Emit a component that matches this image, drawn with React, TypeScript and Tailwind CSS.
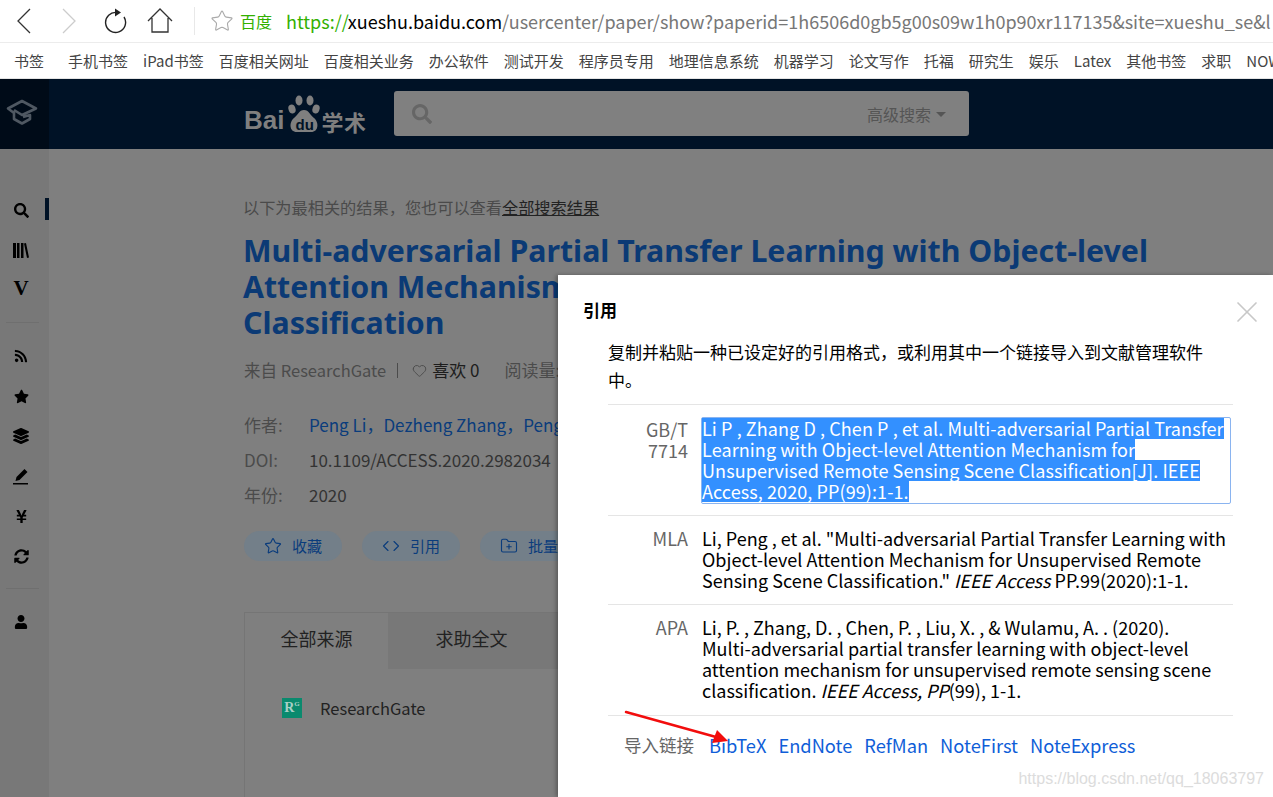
import { Star, Heart, Code, FolderPlus, X } from 'lucide-react'
import { FaSearch, FaRss, FaStar, FaLayerGroup, FaYenSign, FaSyncAlt, FaUser } from 'react-icons/fa'

const bookmarks = [
  '手机书签', 'iPad书签', '百度相关网址', '百度相关业务', '办公软件', '测试开发', '程序员专用', '地理信息系统',
  '机器学习', '论文写作', '托福', '研究生', '娱乐', 'Latex', '其他书签', '求职', 'NOW',
]

const COMMA = '\uFF0C'

const SideRow = ({ children, active }: { children: React.ReactNode; active?: boolean }) => (
  <div className="relative flex h-10 w-full items-center justify-center pr-[7px] text-black">
    {children}
    {active && <span className="absolute top-[8px] right-0 h-[22px] w-1 bg-[#001226]" />}
  </div>
)

const Sidebar = () => (
  <aside className="flex w-[49px] shrink-0 flex-col bg-[#787878] pt-[41px]">
    <SideRow active><FaSearch size={15} /></SideRow>
    <SideRow>
      <svg width="16" height="15" viewBox="0 0 16 15" fill="currentColor">
        <path d="M0 0h3v15H0zM4 0h2.500v15H4zM8 0h2.500v15H8zM11 0.500l2-0.500 3 14.500-2 0.500z" />
      </svg>
    </SideRow>
    <SideRow>
      <span className="-mt-[2px] font-['Liberation_Serif',serif] text-[21px] font-bold">V</span>
    </SideRow>
    <div className="mx-[6px] mt-[12px] mb-[13px] h-px w-[33px] bg-[#6f6f6f]" />
    <SideRow><FaRss size={14} /></SideRow>
    <SideRow><FaStar size={15} /></SideRow>
    <SideRow><FaLayerGroup size={16} /></SideRow>
    <SideRow>
      <svg width="16" height="17" viewBox="0 0 16 17" fill="currentColor">
        <path d="M11.500 1l3 3-8 8-4 1 1-4zM0 15h15v1.500H0z" />
      </svg>
    </SideRow>
    <SideRow><FaYenSign size={15} /></SideRow>
    <SideRow><FaSyncAlt size={15} /></SideRow>
    <div className="mx-[6px] mt-[12px] mb-[13px] h-px w-[33px] bg-[#6f6f6f]" />
    <SideRow><FaUser size={14} /></SideRow>
  </aside>
)

const Logo = () => (
  <div className="flex h-[40px] w-[124px] items-end text-[#7f7f7f]">
    <span className="font-['Liberation_Sans',sans-serif] text-[26px] leading-[27px] font-bold">Bai</span>
    <svg className="mb-[1px] ml-[1px] shrink-0" width="38" height="38" viewBox="0 0 36 38" fill="currentColor">
      <ellipse cx="13" cy="5.500" rx="3.500" ry="5" />
      <ellipse cx="24" cy="5.500" rx="3.500" ry="5" />
      <ellipse cx="6" cy="14" rx="3.500" ry="4.500" transform="rotate(-20 6 14)" />
      <ellipse cx="30" cy="14" rx="3.500" ry="4.500" transform="rotate(20 30 14)" />
      <path d="M18 15c5 0 6 5 10 8 5 4 5 14-3 14H11C3 37 3 27 8 23c4-3 5-8 10-8z" />
    </svg>
    <span className="mb-[2px] ml-[-28px] w-[18px] font-['Liberation_Sans',sans-serif] text-[15px] leading-[15px] font-bold text-[#001226]">du</span>
    <span className="ml-[8px] font-['Noto_Sans_CJK_SC',sans-serif] text-[22px] leading-[26px] font-bold tracking-[0.5px] whitespace-nowrap">学术</span>
  </div>
)

const Pill = ({ icon, label, w }: { icon: React.ReactNode; label: string; w: string }) => (
  <div className={`flex h-[30px] shrink-0 items-center gap-[10px] rounded-full bg-[#737f89] pl-[20px] text-[15px] text-[#0a3c7c] ${w}`}>
    {icon}
    <span className="whitespace-nowrap">{label}</span>
  </div>
)

const Meta = ({ label, children }: { label: string; children: React.ReactNode }) => (
  <div className="flex h-[35px] items-center text-[17px] whitespace-nowrap">
    <span className="w-[65px] text-[#4b4b4b]">{label}</span>
    {children}
  </div>
)

const Citation = ({ label, pad, lines }: { label: string; pad: string; lines: React.ReactNode[] }) => (
  <div className={`flex border-t border-[#e5e5e5] pt-[12px] ${pad}`}>
    <div className="w-[80px] shrink-0 text-right text-[18px] leading-[21px] text-[#666]">{label}</div>
    <div className="ml-[14px] text-[18px] leading-[21px] whitespace-nowrap text-black">
      {lines.map((line, i) => (
        <div key={i}>{line}</div>
      ))}
    </div>
  </div>
)

const selected = [
  'Li P , Zhang D , Chen P , et al. Multi-adversarial Partial Transfer',
  'Learning with Object-level Attention Mechanism for',
  'Unsupervised Remote Sensing Scene Classification[J]. IEEE',
  'Access, 2020, PP(99):1-1.',
]

const CiteModal = () => (
  <div className="absolute top-[196px] left-[558px] h-[522px] w-[715px] overflow-hidden bg-white pl-[25px] shadow-[-2px_0_4px_rgba(0,0,0,0.3)]">
    <h3 className="pt-[23px] text-[17px] leading-[24px] font-bold text-black">引用</h3>
    <X className="absolute top-[19px] right-[8px] text-[#c8c8c8]" size={36} strokeWidth={1.100} />
    <div className="ml-[25px] w-[625px]">
      <p className="mt-[16px] w-[620px] pb-[11px] text-[17px] leading-[27.500px] text-black">
        复制并粘贴一种已设定好的引用格式{COMMA}或利用其中一个链接导入到文献管理软件中。
      </p>
      <div className="flex border-t border-[#e5e5e5] pt-[12px] pb-[11px]">
        <div className="w-[80px] shrink-0 pt-[2px] text-right text-[18px] leading-[21px] text-[#666]">
          GB/T
          <div>7714</div>
        </div>
        <div className="ml-[13px] h-[87px] w-[530px] rounded-[2px] border border-[#8ab4f0] text-[18px] leading-[21px] tracking-[0.09px] whitespace-nowrap text-white">
          {selected.map((line) => (
            <div key={line} className="h-[21px] w-fit bg-[#3390ff]">{line}</div>
          ))}
        </div>
      </div>
      <Citation
        label="MLA"
        pad="pb-[13px]"
        lines={[
          'Li, Peng , et al. "Multi-adversarial Partial Transfer Learning with',
          'Object-level Attention Mechanism for Unsupervised Remote',
          <>Sensing Scene Classification." <i>IEEE Access</i> PP.99(2020):1-1.</>,
        ]}
      />
      <Citation
        label="APA"
        pad="pb-[14px]"
        lines={[
          'Li, P. , Zhang, D. , Chen, P. , Liu, X. , & Wulamu, A. . (2020).',
          'Multi-adversarial partial transfer learning with object-level',
          'attention mechanism for unsupervised remote sensing scene',
          <>classification. <i>IEEE Access, PP</i>(99), 1-1.</>,
        ]}
      />
      <div className="flex items-center border-t border-[#e5e5e5] pt-[17px] pl-[16px] leading-[24px]">
        <span className="text-[17.500px] text-[#666]">导入链接</span>
        <div className="ml-[15px] flex gap-[12px] text-[18.300px] text-[#0f5ed8]">
          <span>BibTeX</span>
          <span>EndNote</span>
          <span>RefMan</span>
          <span>NoteFirst</span>
          <span>NoteExpress</span>
        </div>
      </div>
    </div>
    <span className="absolute right-[9px] bottom-[8px] font-['Liberation_Sans',sans-serif] text-[16px] leading-[20px] text-[#dcdcdc]">
      https://blog.csdn.net/qq_18063797
    </span>
    <svg className="absolute top-[435px] left-[66px]" width="106" height="34" viewBox="0 0 106 34">
      <path d="M2 2L92 27" stroke="#f20d0d" strokeWidth="2.500" strokeLinecap="round" />
      <path d="M104 31L88 33L93 20z" fill="#f20d0d" />
    </svg>
  </div>
)

export default function App() {
  return (
    <div className="h-[797px] w-[1273px] overflow-hidden bg-white font-['Noto_Sans_CJK_SC',sans-serif]">
      <div className="flex h-[43px] items-center border-b border-[#ececec] text-[#333]">
        <svg className="ml-[16px] shrink-0" width="15" height="28" viewBox="0 0 15 28" fill="none" stroke="#333" strokeWidth="1.300">
          <path d="M14 2L2 14l12 12" />
        </svg>
        <svg className="ml-[31px] shrink-0" width="15" height="28" viewBox="0 0 15 28" fill="none" stroke="#ccc" strokeWidth="1.300">
          <path d="M1 2l12 12L1 26" />
        </svg>
        <svg className="ml-[26px] shrink-0" width="24" height="26" viewBox="0 0 24 26" fill="none" stroke="#222" strokeWidth="1.400">
          <path d="M14 4.500A10 10 0 1 0 21 9" />
          <path d="M12 0.500l6 4-6 4z" fill="#222" stroke="none" />
        </svg>
        <svg className="ml-[20px] shrink-0" width="26" height="26" viewBox="0 0 26 26" fill="none" stroke="#333" strokeWidth="1.300">
          <path d="M1 13L13 1l12 12M5 10v14h16V10" />
        </svg>
        <div className="ml-[21px] h-[28px] w-px bg-[#e8e8e8]" />
        <Star className="ml-[15px] text-[#aaa]" size={24} strokeWidth={1.100} />
        <span className="ml-[6px] text-[16px] whitespace-nowrap text-[#33b000]">百度</span>
        <div className="ml-[14px] text-[18px] whitespace-nowrap">
          <span className="text-[#33b000]">https://</span>
          <span className="-ml-[1px] text-black">xueshu.baidu.com</span>
          <span className="text-[#777]">/usercenter/paper/show?paperid=1h6506d0gb5g00s09w1h0p90xr117135&amp;site=xueshu_se&amp;l</span>
        </div>
      </div>
      <div className="flex h-[36px] items-center border-b border-[#e4e4e4] pt-px pl-[14px] text-[15px] whitespace-nowrap text-[#444]">
        <span>书签</span>
        <div className="mr-[12px] ml-[12px] h-[20px] w-px bg-[#ddd]" />
        <div className="flex gap-[15px]">
          {bookmarks.map((b) => (
            <span key={b}>{b}</span>
          ))}
        </div>
      </div>
      <div className="relative h-[718px] overflow-hidden bg-[#7f7f7f]">
        <div className="flex h-[70px] bg-[#001226]">
          <div className="flex w-[49px] items-center justify-center bg-[#000b18] pr-[5px] pb-[4px] text-[#4f5862]">
            <svg width="32" height="26" viewBox="0 0 32 26" fill="none" stroke="currentColor" strokeWidth="2.600" strokeLinejoin="round">
              <path d="M8 14L2 9.500 16 2l14 7.500L16 16l-8-5M8 13v7l8 4.500 8-4.500v-4l-7 2" />
            </svg>
          </div>
          <div className="ml-[195px] flex items-center pb-[1px]">
            <Logo />
            <div className="ml-[26px] flex h-[45px] w-[575px] items-center rounded-[3px] bg-[#808080] pr-[23px] pl-[18px]">
              <FaSearch className="text-[#666]" size={20} />
              <span className="ml-auto text-[16px] whitespace-nowrap text-[#555]">高级搜索</span>
              <span className="mt-[2px] ml-[5px] h-0 w-0 border-x-[5px] border-t-[5px] border-x-transparent border-t-[#555]" />
            </div>
          </div>
        </div>
        <div className="flex h-[648px]">
          <Sidebar />
          <main className="pl-[195px]">
            <p className="-ml-px pt-[47px] text-[16.200px] leading-[22px] whitespace-nowrap text-[#4a4a4a]">
              以下为最相关的结果{COMMA}您也可以查看<span className="text-[#222] underline">全部搜索结果</span>
            </p>
            <h1 className="mt-[15px] -ml-px w-[960px] font-['Noto_Sans',sans-serif] text-[30.300px] leading-[36px] font-bold whitespace-nowrap text-[#0b3a75]">
              <div>Multi-adversarial Partial Transfer Learning with Object-level</div>
              <div>Attention Mechanism for Unsupervised Remote Sensing Scene</div>
              <div>Classification</div>
            </h1>
            <div className="mt-[16px] flex h-[26px] items-center text-[16.500px] whitespace-nowrap text-[#4b4b4b]">
              <span>来自 ResearchGate</span>
              <div className="mx-[11px] h-[15px] w-px bg-[#4b4b4b]" />
              <Heart className="ml-[3px]" size={15} strokeWidth={1.500} />
              <span className="ml-[5px] text-[17px] text-[#1d1d1d]">喜欢 0</span>
              <span className="ml-[25px] text-[17px]">阅读量:</span>
            </div>
            <div className="mt-[24px]">
              <Meta label="作者:">
                <span className="text-[#0a3c7c]">Peng Li{COMMA}Dezheng Zhang{COMMA}Peng Chen</span>
              </Meta>
              <Meta label="DOI:">
                <span className="text-[#333]">10.1109/ACCESS.2020.2982034</span>
              </Meta>
              <Meta label="年份:">
                <span className="text-[#333]">2020</span>
              </Meta>
            </div>
            <div className="mt-[19px] flex gap-[20px]">
              <Pill icon={<Star size={18} strokeWidth={1.500} />} label="收藏" w="w-[98px]" />
              <Pill icon={<Code size={18} strokeWidth={1.500} />} label="引用" w="w-[98px]" />
              <Pill icon={<FolderPlus size={18} strokeWidth={1.500} />} label="批量引用" w="w-[130px]" />
            </div>
            <div className="mt-[51px] h-[200px] w-[700px] border border-[#757575]">
              <div className="flex h-[56px] text-[18px] text-[#222]">
                <div className="flex w-[143px] items-center justify-center pb-[5px]">全部来源</div>
                <div className="flex w-[167px] items-center justify-center bg-[#787878] pb-[5px]">求助全文</div>
                <div className="flex-1 bg-[#787878]" />
              </div>
              <div className="mt-[27px] flex items-center pl-[37px] text-[16.500px] text-[#222]">
                <span className="flex h-5 w-5 items-start justify-center bg-[#0a8a6e] pt-[2px] font-['Liberation_Serif',serif] text-[14px] leading-[16px] font-bold text-[#a8d0c6]">
                  R<span className="text-[7px] leading-[8px]">G</span>
                </span>
                <span className="ml-[18px]">ResearchGate</span>
              </div>
            </div>
          </main>
        </div>
        <CiteModal />
      </div>
    </div>
  )
}
